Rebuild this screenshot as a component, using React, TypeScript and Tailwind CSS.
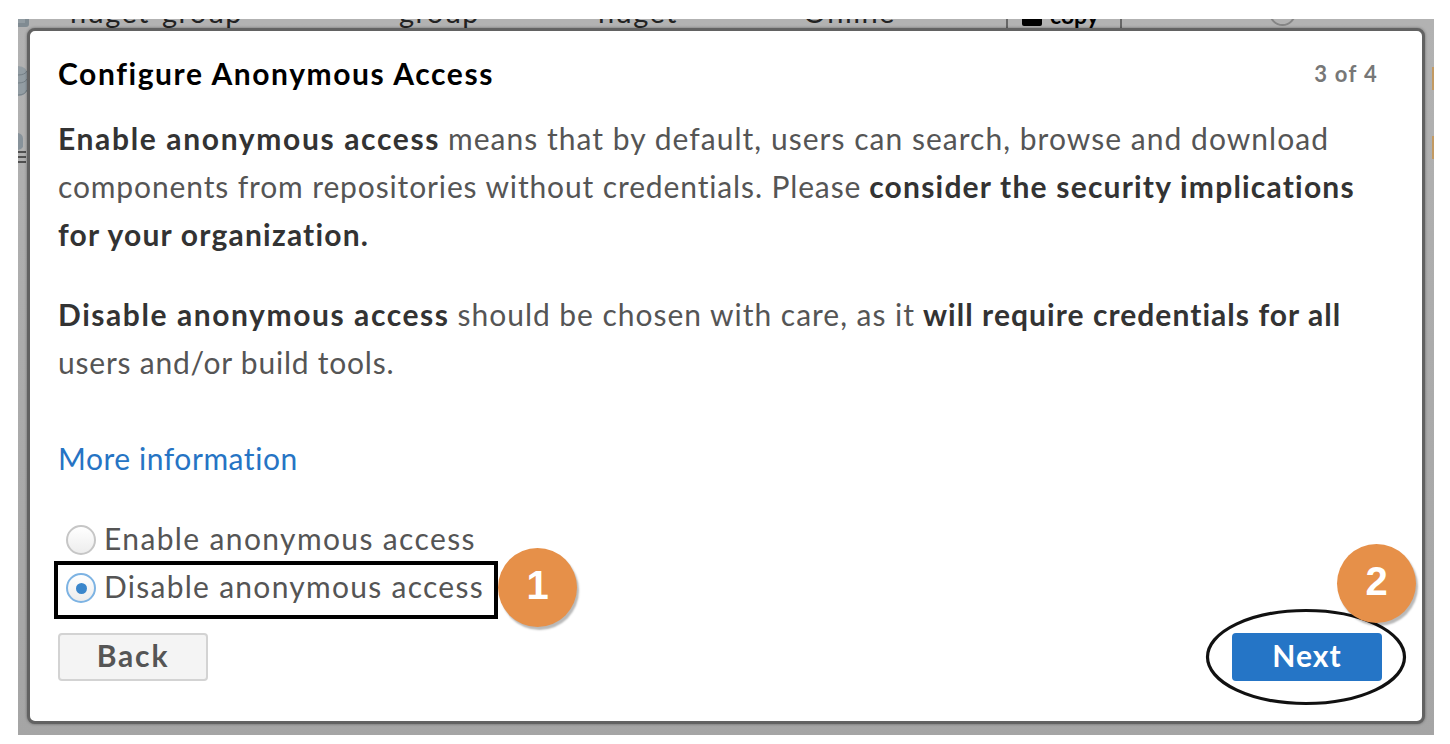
import type { ReactNode } from "react";

function Backdrop() {
  return (
    <div className="absolute inset-0 flex justify-between overflow-hidden bg-linear-to-b from-[#b2b2b2] to-[#a5a5a5]">
      <svg className="h-[180px] w-3 shrink-0" viewBox="0 0 12 180">
        <path d="M0 0H11V5Q11 8 8 8H0Z" fill="#808b92" />
        <path d="M0 0H7V4H0Z" fill="#929ca2" />
        <path d="M0 47Q9 48 9 54V71Q7 77 0 77Z" fill="#939da3" />
        <path d="M0 56Q7 56 9 52M0 64Q7 64 9 60M0 76Q7 76 9 71" stroke="#737e85" fill="none" />
        <path d="M0 114Q5 115 5 120V128Q3 131 0 131Z" fill="#87929a" />
        <path d="M0 133H8M0 138H8M0 143H8" stroke="#505050" strokeWidth="2" />
      </svg>
      <div className="-mt-[25px] flex h-9 grow whitespace-nowrap pl-10 text-[29px] leading-9 tracking-[1.4px] text-[#222]">
        <span className="w-[329px]">nuget-group</span>
        <span className="w-[199px]">group</span>
        <span className="w-[205px]">nuget</span>
        <span className="w-[203px]">Online</span>
        <div className="mt-0.5 flex h-[52px] w-[116px] border-2 border-[#666] pl-3.5 text-black">
          <div className="h-7 w-5 rounded-b-[2px] bg-black" />
          <span className="-mt-px pl-2 text-[23px] font-bold tracking-normal">copy</span>
        </div>
        <div className="ml-[147px] mt-[5px] size-[27px] rounded-full border-2 border-[#858585]" />
      </div>
      <div className="flex w-0.5 shrink-0 flex-col gap-[46px] pt-12">
        <div className="h-[23px] bg-[#c39a62]" />
        <div className="h-[23px] bg-[#c39a62]" />
      </div>
    </div>
  );
}

function Badge({ children, className }: { children: string; className: string }) {
  return (
    <div className={`absolute flex size-[79px] items-center justify-center rounded-full bg-[#e69049] pb-[5px] font-['Liberation_Sans',sans-serif] text-[40px] font-bold text-white shadow-[2px_3px_2px_rgba(0,0,0,0.28)] ${className}`}>
      {children}
    </div>
  );
}

function Strong({ children, className }: { children: ReactNode; className: string }) {
  return <strong className={`font-bold text-[#333] ${className}`}>{children}</strong>;
}

function Radio({ checked = false }: { checked?: boolean }) {
  return (
    <span
      className={`mt-1 flex size-[30px] items-center justify-center rounded-full border-2 bg-linear-to-b ${
        checked ? "border-[#7db3e3] from-white to-[#ececec]" : "border-[#c6c6c6] from-white to-[#ededed]"
      }`}
    >
      {checked && <span className="size-[11px] rounded-full bg-[#3a86cb]" />}
    </span>
  );
}

export default function App() {
  return (
    <div className="h-[744px] w-[1450px] overflow-hidden bg-white pl-[18px] pt-[19px] font-['Lato',sans-serif] text-[30px] text-[#555]">
      <div className="relative h-[716px] w-[1416px] overflow-hidden pl-[9px] pt-[9px]">
        <Backdrop />
        <div className="relative flex h-[696px] w-[1398px] flex-col whitespace-nowrap rounded-[8px] border-[3px] border-[#626262] bg-white pl-7 pr-10 shadow-[0_0_3px_rgba(0,0,0,0.4)]">
          <div className="flex h-[82px] items-center justify-between pr-1 pt-0.5">
            <h1 className="text-[30px] font-bold tracking-[1.58px] text-black">Configure Anonymous Access</h1>
            <span className="text-[22px] font-bold tracking-[1.3px] text-[#777]">3 of 4</span>
          </div>
          <div className="pt-px leading-[48px]">
            <p className="flex gap-2">
              <Strong className="tracking-[1.64px]">Enable anonymous access</Strong>
              <span className="tracking-[1.03px]">means that by default, users can search, browse and download</span>
            </p>
            <p className="flex gap-2">
              <span className="tracking-[0.87px]">components from repositories without credentials. Please</span>
              <Strong className="tracking-[1.2px]">consider the security implications</Strong>
            </p>
            <p>
              <Strong className="tracking-[1.2px]">for your organization.</Strong>
            </p>
            <p className="flex gap-2 pt-8">
              <Strong className="tracking-[1.57px]">Disable anonymous access</Strong>
              <span className="tracking-[0.97px]">should be chosen with care, as it</span>
              <Strong className="tracking-[1.05px]">will require credentials for all</Strong>
            </p>
            <p className="tracking-[0.78px]">users and/or build tools.</p>
            <a className="block pt-12 tracking-[0.55px] text-[#2674c4]">More information</a>
          </div>
          <div className="flex flex-col pl-2 pt-8 leading-[48px]">
            <label className="flex h-12 items-center gap-2">
              <Radio />
              <span className="tracking-[1.37px]">Enable anonymous access</span>
            </label>
            <label className="flex h-12 items-center gap-2">
              <Radio checked />
              <span className="tracking-[1.27px]">Disable anonymous access</span>
            </label>
          </div>
          <div className="flex justify-between pt-[23px]">
            <button className="h-12 w-[150px] rounded-[4px] border-2 border-[#d3d3d3] bg-[#f4f4f4] pb-1 font-bold leading-10 tracking-[1.8px] text-[#555]">Back</button>
            <button className="h-12 w-[150px] rounded-[4px] bg-[#2575c6] pb-1 font-bold leading-10 tracking-[1px] text-white">Next</button>
          </div>
        </div>
        <div className="absolute left-[36px] top-[542px] h-[58px] w-[444px] border-[4px] border-black" />
        <svg className="absolute left-[1186px] top-[587px]" width="204" height="102" viewBox="0 0 204 102">
          <ellipse cx="102" cy="51" rx="98.5" ry="46.5" fill="none" stroke="#111" strokeWidth="3.2" />
        </svg>
        <Badge className="left-[480px] top-[529px]">1</Badge>
        <Badge className="left-[1319px] top-[525px]">2</Badge>
      </div>
    </div>
  );
}
